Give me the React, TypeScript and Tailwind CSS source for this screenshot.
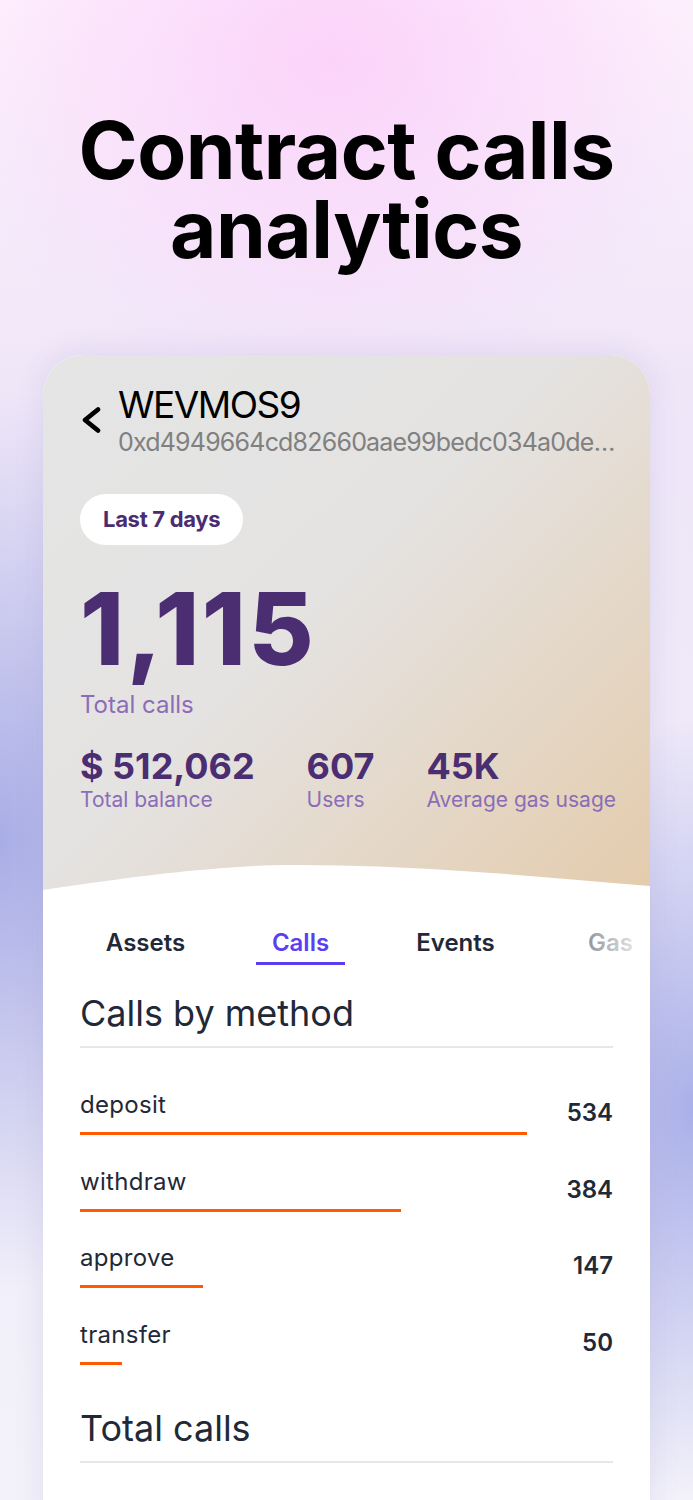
import React from "react";

const rows = [
  { name: "deposit", value: 534 },
  { name: "withdraw", value: 384 },
  { name: "approve", value: 147 },
  { name: "transfer", value: 50 },
];

const tabs = [
  { name: "Assets", active: false },
  { name: "Calls", active: true },
  { name: "Events", active: false },
  { name: "Gas", active: false },
];

const stats = [
  { value: "$ 512,062", label: "Total balance" },
  { value: "607", label: "Users" },
  { value: "45K", label: "Average gas usage" },
];

export default function App() {
  return (
    <div className="relative h-[1500px] w-full overflow-hidden bg-[#f6f3fb] bg-[radial-gradient(ellipse_58%_22%_at_48%_4%,#fbd3fa_0%,rgba(251,211,250,0)_100%),radial-gradient(ellipse_34%_30%_at_0%_56%,#a8ade6_0%,rgba(168,173,230,0)_100%),radial-gradient(ellipse_32%_26%_at_100%_74%,#aab0e9_0%,rgba(170,176,233,0)_100%),linear-gradient(180deg,#fdf2fd_0%,#efe6f8_25%,#eeeaf8_60%,#f3f2fa_100%)] font-['Inter',sans-serif]">
      <h1 className="pt-[110px] text-center text-[80px] font-bold leading-[79px] tracking-[-0.5px] text-black">
        Contract calls
        <br />
        analytics
      </h1>

      <div className="mx-[43px] mt-[87px] overflow-hidden rounded-t-[40px] bg-white shadow-[0_0_30px_rgba(90,80,160,0.12)]">
        <div className="relative bg-[linear-gradient(135deg,#e5e5e5_0%,#e4e3e2_45%,#e4ccad_100%)] px-[37px] pb-[78px] pt-[28px]">
          <div className="flex items-center gap-[14px]">
            <svg width="24" height="30" viewBox="0 0 24 30" className="shrink-0">
              <polyline
                points="18,4.5 5,15 18,25.5"
                fill="none"
                stroke="#000"
                strokeWidth="4.8"
                strokeLinecap="round"
                strokeLinejoin="round"
              />
            </svg>
            <div className="-mr-[6px] min-w-0">
              <div className="text-[37px] leading-[44px] tracking-[-1.5px] text-black">WEVMOS9</div>
              <div className="truncate text-[25px] leading-[30px] tracking-[-0.8px] text-[#808080]">
                0xd4949664cd82660aae99bedc034a0dea8a0bd517
              </div>
            </div>
          </div>

          <div className="mt-[37px] inline-flex h-[51px] items-center rounded-full bg-white px-[23px] text-[22px] font-bold tracking-[-0.3px] text-[#4b2c72]">
            Last 7 days
          </div>

          <div className="mt-[34px] text-[100px] font-extrabold leading-none tracking-[2.5px] text-[#4b2d72]">
            1,115
          </div>
          <div className="mt-[12px] text-[24px] leading-[28px] text-[#8b6db7]">Total calls</div>

          <div className="mt-[27px] flex gap-[52px] whitespace-nowrap">
            {stats.map((s) => (
              <div key={s.label} className="shrink-0">
                <div className="text-[36px] font-bold leading-[40px] text-[#4b2d72]">{s.value}</div>
                <div className="mt-[1px] text-[21px] leading-[26px] text-[#8b6db7]">{s.label}</div>
              </div>
            ))}
          </div>

          <svg
            className="absolute bottom-0 left-0 h-[26px] w-full"
            viewBox="0 0 607 26"
            preserveAspectRatio="none"
          >
            <path d="M0,25 C110,8 190,0 250,0 C380,0 500,12 607,21 L607,26 L0,26 Z" fill="#ffffff" />
          </svg>
        </div>

        <div className="bg-white px-[37px] pb-[300px] pt-[37px]">
          <div className="relative -ml-[12px] -mr-[38px] flex overflow-hidden">
            {tabs.map((t) => (
              <div key={t.name} className="flex w-[155px] shrink-0 justify-center">
                <div
                  className={
                    t.active
                      ? "border-b-[3px] border-[#5a3ff2] px-4 pb-[5px] text-[24px] font-semibold leading-[29px] text-[#5a3ff2]"
                      : "border-b-[3px] border-transparent px-4 pb-[5px] text-[24px] font-semibold leading-[29px] text-[#1f2937]"
                  }
                >
                  {t.name}
                </div>
              </div>
            ))}
            <div className="pointer-events-none absolute bottom-0 right-0 top-0 w-[130px] bg-linear-to-r from-white/0 to-white" />
          </div>

          <div className="mt-[28px] border-b-2 border-[#e7e7e7] pb-[13px] text-[36px] leading-[40px] text-[#1f2937]">
            Calls by method
          </div>

          <div className="mt-[43px] flex flex-col gap-[32.5px]">
            {rows.map((r) => (
              <div key={r.name} className="flex items-center">
                <div className="flex-1">
                  <div className="text-[24px] leading-[28px] tracking-[0.3px] text-[#1f2937]">{r.name}</div>
                  <div
                    className="mt-[13px] h-[3px] bg-[#ff5a00]"
                    style={{ width: `${(r.value / 534) * 447}px` }}
                  />
                </div>
                <div className="text-[24px] font-semibold leading-[28px] text-[#1f2937]">{r.value}</div>
              </div>
            ))}
          </div>

          <div className="mt-[43px] border-b-2 border-[#e7e7e7] pb-[13px] text-[36px] leading-[40px] text-[#1f2937]">
            Total calls
          </div>
        </div>
      </div>
    </div>
  );
}
